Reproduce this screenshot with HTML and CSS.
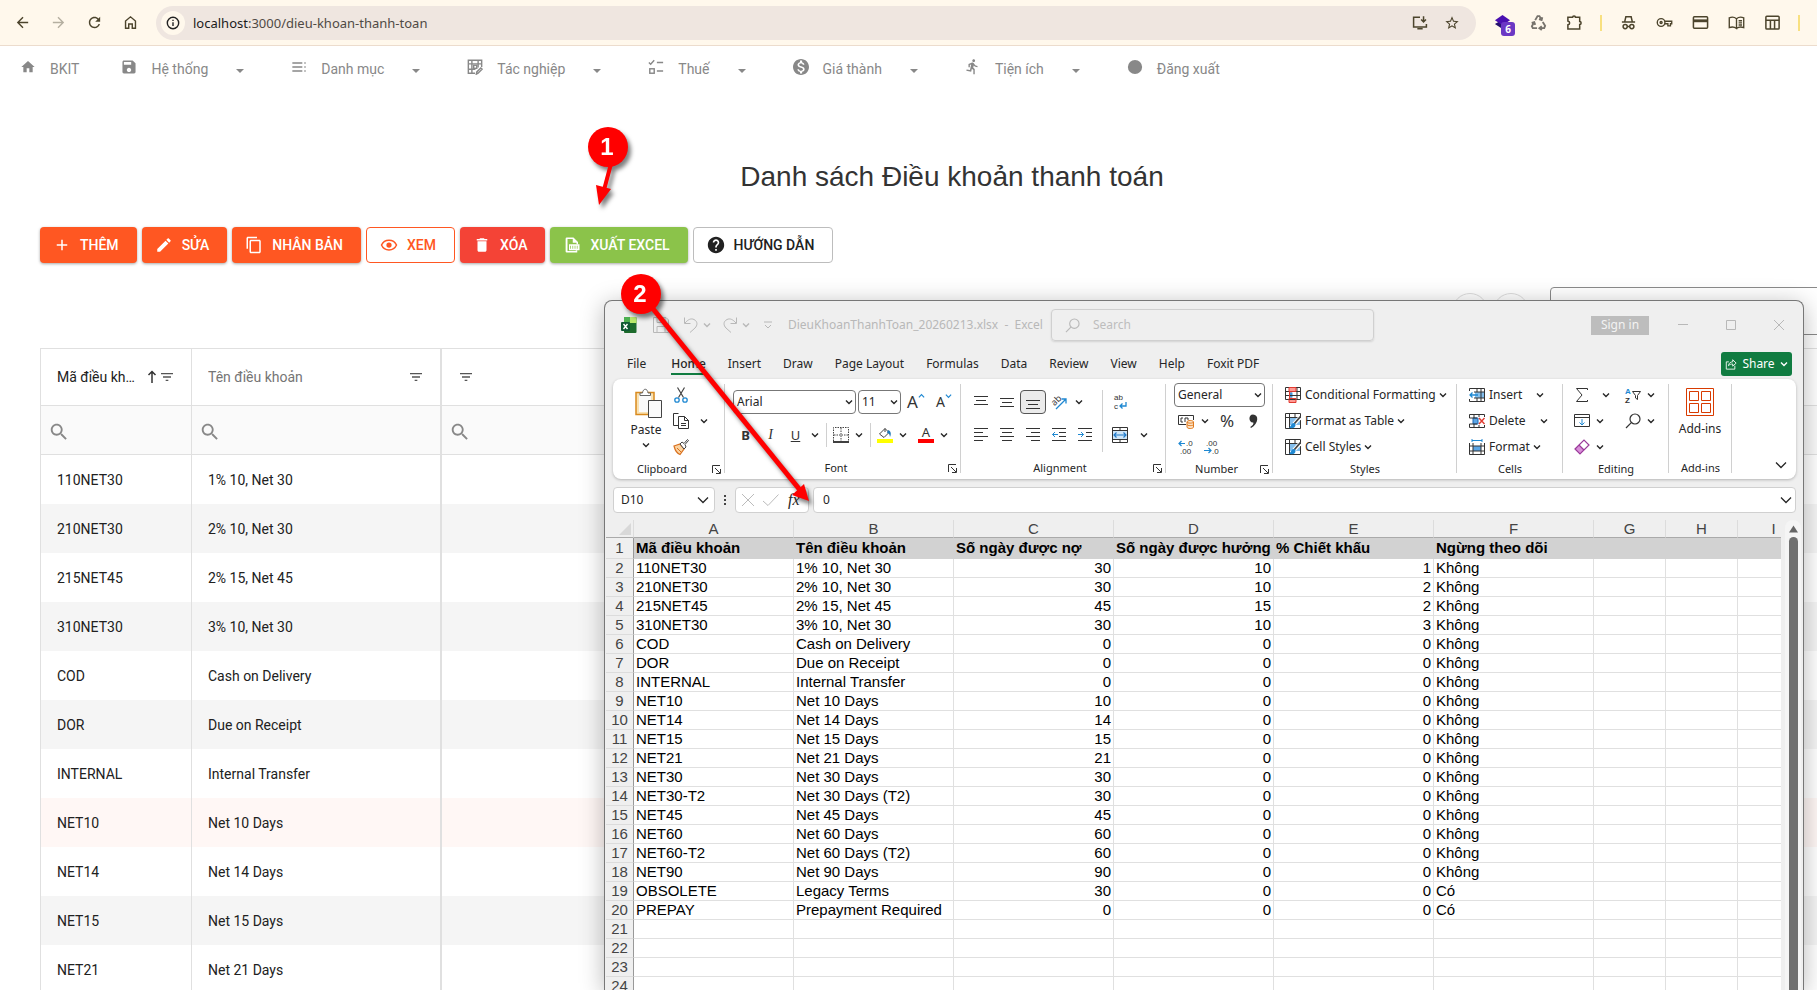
FILE: index.html
```html
<!DOCTYPE html>
<html lang="vi">
<head>
<meta charset="utf-8">
<title>Danh sách Điều khoản thanh toán</title>
<link rel="stylesheet" href="styles.css">
</head>
<body>
<svg class="sprite" aria-hidden="true">
  <symbol id="chev" viewBox="0 0 8 6"><path d="M1 1.500l3 3 3-3" fill="none" stroke="currentColor" stroke-width="1.400"/></symbol>
  <symbol id="chevl" viewBox="0 0 12 8"><path d="M1 1.500l5 5 5-5" fill="none" stroke="currentColor" stroke-width="1.300"/></symbol>
  <symbol id="filter" viewBox="0 0 24 24"><path d="M10 18h4v-2h-4v2zM3 6v2h18V6H3zm3 7h12v-2H6v2z"/></symbol>
  <symbol id="search" viewBox="0 0 24 24"><path d="M15.500 14h-.79l-.28-.27C15.410 12.590 16 11.110 16 9.500 16 5.910 13.090 3 9.500 3S3 5.910 3 9.500 5.910 16 9.500 16c1.610 0 3.090-.59 4.230-1.570l.27.28v.79l5 4.990L20.490 19l-4.990-5zm-6 0C7.010 14 5 11.990 5 9.500S7.010 5 9.500 5 14 7.010 14 9.500 11.990 14 9.500 14z"/></symbol>
  <symbol id="drop" viewBox="0 0 8 4"><path d="M0 0h8L4 4z"/></symbol>
  <symbol id="launch" viewBox="0 0 9 9"><path d="M.5 8V.5H8M3 3l5 5M8.500 4v4.500H4" fill="none" stroke="#333"/></symbol>
  <symbol id="glass" viewBox="0 0 16 16"><path d="M1 15l5.300-5.300" fill="none" stroke="currentColor" stroke-width="1.200"/><circle cx="10" cy="6" r="5" fill="none" stroke="currentColor" stroke-width="1.200"/></symbol>
  <symbol id="paintgrid" viewBox="0 0 16 16"><path d="M4 4h11v8H4z" fill="#83beec"/><path d="M.5.5h15v15H.500zM.5 4.500h15M4.500.5v15M10 .5v4" fill="none" stroke="#333"/><path d="M15.500 4L9 11" stroke="#fff" stroke-width="4"/><path d="M15.500 3.500L9 11" stroke="#444" stroke-width="1.800"/><path d="M9.500 10c-3-.5-3 3-5.500 4.500 3 1.500 7 .5 6.500-3z" fill="#1e88d2"/></symbol>
</svg>

<header class="chrome">
  <div class="chrome-nav">
    <button class="cb" aria-label="Back"><svg viewBox="0 0 24 24"><path d="M20 11H7.830l5.590-5.590L12 4l-8 8 8 8 1.410-1.410L7.830 13H20v-2z"/></svg></button>
    <button class="cb dim" aria-label="Forward"><svg viewBox="0 0 24 24"><path d="M4 13h12.170l-5.590 5.590L12 20l8-8-8-8-1.410 1.410L16.170 11H4v2z"/></svg></button>
    <button class="cb" aria-label="Reload"><svg viewBox="0 0 24 24"><path d="M17.650 6.350C16.200 4.900 14.210 4 12 4c-4.420 0-7.990 3.580-7.990 8s3.570 8 7.990 8c3.730 0 6.840-2.550 7.730-6h-2.080c-.82 2.330-3.040 4-5.650 4-3.310 0-6-2.690-6-6s2.690-6 6-6c1.660 0 3.140.69 4.220 1.780L13 11h7V4l-2.350 2.350z"/></svg></button>
    <button class="cb" aria-label="Home"><svg viewBox="0 0 24 24" class="ln"><path d="M5 20V10l7-6 7 6v10h-4.500v-6h-5v6z"/></svg></button>
  </div>
  <div class="omni">
    <span class="omni-info"><svg viewBox="0 0 16 16" class="ln"><circle cx="8" cy="8" r="6.500"/><path d="M8 7v4.500M8 4.300v1.500"/></svg></span>
    <span class="url"><b>localhost</b>:3000/dieu-khoan-thanh-toan</span>
    <svg viewBox="0 0 18 18" class="ln omni-ic"><path d="M9 2.500H1.800v11h14.400V10M6 15.500h6M13 1.500v6M10.300 5L13 7.700 15.700 5"/></svg>
    <svg viewBox="0 0 24 24" class="omni-ic"><path d="M22 9.240l-7.190-.62L12 2 9.190 8.630 2 9.240l5.460 4.730L5.820 21 12 17.270 18.180 21l-1.630-7.030L22 9.240zM12 15.400l-3.760 2.270 1-4.280-3.320-2.880 4.380-.38L12 6.100l1.710 4.040 4.380.38-3.320 2.880 1 4.280L12 15.400z"/></svg>
  </div>
  <div class="exts">
    <span class="ext"><svg viewBox="0 0 18 18"><path d="M9 6l8 4.500L9 16 1 10.500z" fill="#24106e"/><path d="M9 1l8 5.500L9 12 1 6.500z" fill="#4a10b0"/></svg><span class="count">6</span></span>
    <span class="ext grey"><svg viewBox="0 0 18 18" class="ln2"><path d="M5.500 6.500L8 2.200h2l2 3.500M13 3.500L12.300 6.300 9.500 5.500M13.500 8.500l2.500 4-1 2.500h-4.500M12.500 13L10 15l2.500 2M7.500 15H3l-1-2 2.200-4M1.800 9.500L4.500 8.700l1 2.800" stroke-width="2"/></svg></span>
    <span class="ext"><svg viewBox="0 0 18 18" class="ln2"><path d="M2 3.500h5a1.500 1.500 0 0 1 3 0h4.500v4.500a1.500 1.500 0 0 1 0 3v5H2v-4.500c2.500-.5 2.500-3.500 0-4z"/></svg></span>
    <i class="vbar"></i>
    <span class="ext"><svg viewBox="0 0 18 18" class="ln2"><path d="M2 8.500h14M5 8l1.200-5h5.600L13 8M8 13.300h2"/><circle cx="5.500" cy="13.300" r="2.200"/><circle cx="12.500" cy="13.300" r="2.200"/></svg></span>
    <span class="ext"><svg viewBox="0 0 20 18" class="ln2"><circle cx="6" cy="9" r="4.500"/><circle cx="6" cy="9" r="1.200"/><path d="M10.300 7.500H18.500v3h-1.500V13h-3v-2.500h-3.700"/></svg></span>
    <span class="ext"><svg viewBox="0 0 18 18" class="ln2"><rect x="1.500" y="3" width="15" height="12" rx="1"/><path d="M1.500 7.200h15" stroke-width="3"/></svg></span>
    <span class="ext"><svg viewBox="0 0 20 18" class="ln2"><path d="M10 4.500v11.500C7.500 14 4 14 1.500 15V3.500C4 2.500 7.500 2.500 10 4.500zM10 4.500c2.500-2 6-2 8.500-1V15c-2.500-1-6-1-8.500 1M12.500 7h4M12.500 9.500h4M12.500 12h4"/></svg></span>
    <span class="ext"><svg viewBox="0 0 18 18" class="ln2"><rect x="2" y="2.500" width="14" height="13.500" rx="1"/><path d="M2 6.500h14M6.800 6.500V16M11.200 6.500V16"/></svg></span>
    <i class="vbar"></i>
  </div>
</header>

<nav class="menu">
  <a class="mi" href="#"><svg viewBox="0 0 24 24"><path d="M10 20v-6h4v6h5v-8h3L12 3 2 12h3v8z"/></svg>BKIT</a>
  <a class="mi" href="#"><svg viewBox="1 1 22 22"><path d="M17 3H5c-1.110 0-2 .9-2 2v14c0 1.100.89 2 2 2h14c1.100 0 2-.9 2-2V7l-4-4zm-5 16c-1.660 0-3-1.340-3-3s1.340-3 3-3 3 1.340 3 3-1.340 3-3 3zm3-10H5V5h10v4z"/></svg>Hệ thống<svg class="dn"><use href="#drop"/></svg></a>
  <a class="mi" href="#"><svg viewBox="0 0 24 24"><path d="M2 5h15v2H2zM2 11h15v2H2zM2 17h15v2H2zM20 5h2v2h-2zM20 11h2v2h-2zM20 17h2v2h-2z"/></svg>Danh mục<svg class="dn"><use href="#drop"/></svg></a>
  <a class="mi" href="#"><svg viewBox="0 0 18 18" class="ln2"><path d="M9 16H1.500V1.500h15V9M1.500 5.500h15M1.500 11.500h8M5.500 1.500v14.500M12.500 1.500v8"/><rect x="7.500" y="7" width="3.500" height="3.500"/><path d="M10.500 17l.5-2.500 4.500-4.500 1.500 1.500-4.500 4.500z"/></svg>Tác nghiệp<svg class="dn"><use href="#drop"/></svg></a>
  <a class="mi" href="#"><svg viewBox="0 0 18 18" class="ln2"><path d="M1 4l2 2L7 1.500M10 4h7M10 13.500h7"/><rect x="2" y="11" width="5" height="5"/></svg>Thuế<svg class="dn"><use href="#drop"/></svg></a>
  <a class="mi" href="#"><svg viewBox="2 2 20 20"><path d="M12 2C6.480 2 2 6.480 2 12s4.480 10 10 10 10-4.480 10-10S17.520 2 12 2zm1.410 16.090V20h-2.670v-1.930c-1.710-.36-3.160-1.460-3.270-3.400h1.960c.1 1.050.82 1.870 2.650 1.870 1.960 0 2.400-.98 2.400-1.590 0-.83-.44-1.610-2.670-2.140-2.480-.6-4.180-1.620-4.180-3.670 0-1.720 1.390-2.840 3.110-3.210V4h2.670v1.950c1.860.45 2.790 1.860 2.850 3.390H14.300c-.05-1.110-.64-1.870-2.220-1.870-1.500 0-2.400.68-2.400 1.640 0 .84.65 1.390 2.670 1.910s4.180 1.390 4.180 3.910c-.01 1.830-1.380 2.830-3.120 3.160z"/></svg>Giá thành<svg class="dn"><use href="#drop"/></svg></a>
  <a class="mi" href="#"><svg viewBox="1 1 23 23"><path d="M13.490 5.480c1.100 0 2-.9 2-2s-.9-2-2-2-2 .9-2 2 .9 2 2 2zm-3.600 13.900l1-4.400 2.100 2v6h2v-7.500l-2.100-2 .6-3c1.300 1.500 3.300 2.500 5.500 2.500v-2c-1.900 0-3.500-1-4.300-2.400l-1-1.600c-.4-.6-1-1-1.700-1-.3 0-.5.1-.8.1l-5.200 2.200v4.700h2v-3.400l1.800-.7-1.600 8.100-4.900-1-.4 2 7 1.400z"/></svg>Tiện ích<svg class="dn"><use href="#drop"/></svg></a>
  <a class="mi" href="#"><svg viewBox="0 0 18 18"><circle cx="9" cy="9" r="8"/></svg>Đăng xuất</a>
</nav>

<main class="page">
  <h1>Danh sách Điều khoản thanh toán</h1>
  <div class="actions">
    <button class="act orange"><svg viewBox="0 0 24 24"><path d="M19 13h-6v6h-2v-6H5v-2h6V5h2v6h6v2z"/></svg>THÊM</button>
    <button class="act orange"><svg viewBox="0 0 24 24"><path d="M3 17.250V21h3.750L17.810 9.940l-3.750-3.750L3 17.250zM20.710 7.040c.39-.39.39-1.020 0-1.410l-2.340-2.340c-.39-.39-1.020-.39-1.410 0l-1.830 1.830 3.750 3.750 1.830-1.830z"/></svg>SỬA</button>
    <button class="act orange"><svg viewBox="0 0 24 24"><path d="M16 1H4c-1.100 0-2 .9-2 2v14h2V3h12V1zm3 4H8c-1.100 0-2 .9-2 2v14c0 1.100.9 2 2 2h11c1.100 0 2-.9 2-2V7c0-1.100-.9-2-2-2zm0 16H8V7h11v14z"/></svg>NHÂN BẢN</button>
    <button class="act outline"><svg viewBox="0 0 24 24"><path d="M2 12c2-4.500 6-6.500 10-6.500s8 2 10 6.500c-2 4.500-6 6.500-10 6.500S4 16.500 2 12z" fill="none" stroke="currentColor" stroke-width="2"/><circle cx="12" cy="12" r="3.500"/></svg>XEM</button>
    <button class="act red"><svg viewBox="0 0 24 24"><path d="M6 19c0 1.100.9 2 2 2h8c1.100 0 2-.9 2-2V7H6v12zM19 4h-3.500l-1-1h-5l-1 1H5v2h14V4z"/></svg>XÓA</button>
    <button class="act green"><svg viewBox="0 0 24 24"><path d="M14 2H5a1.500 1.500 0 0 0-1.500 1.500v17A1.500 1.500 0 0 0 5 22h14v-3h-2v1H6V4h7v5h5v2h2V8z"/><path d="M8 11h14v8H8z"/><path d="M10 13v4M13 13v4M16 13v4M19 13v4" stroke="#8bc34a"/></svg>XUẤT EXCEL</button>
    <button class="act plain"><svg viewBox="1 1 22 22"><path d="M12 2C6.480 2 2 6.480 2 12s4.480 10 10 10 10-4.480 10-10S17.520 2 12 2zm1 17h-2v-2h2v2zm2.070-7.750l-.9.92C13.450 12.900 13 13.500 13 15h-2v-.5c0-1.100.45-2.100 1.170-2.830l1.240-1.260c.37-.36.59-.86.59-1.410 0-1.100-.9-2-2-2s-2 .9-2 2H8c0-2.210 1.790-4 4-4s4 1.790 4 4c0 .88-.36 1.680-.93 2.250z"/></svg>HƯỚNG DẪN</button>
  </div>
  <div class="panel">
    <button class="round" aria-label="Cột"></button>
    <button class="round" aria-label="Xuất"></button>
    <input class="find" type="text" aria-label="Tìm kiếm">
  </div>
  <table class="grid">
    <colgroup><col class="g1"><col class="g2"><col></colgroup>
    <thead>
      <tr class="head">
        <th><div class="th"><span class="lbl dark">Mã điều khoản</span><svg class="up" viewBox="0 0 10 14"><path d="M5 13V1.500M1.500 5L5 1.500 8.500 5" fill="none" stroke="currentColor" stroke-width="1.500"/></svg><svg class="fi"><use href="#filter"/></svg></div></th>
        <th><div class="th"><span class="lbl">Tên điều khoản</span><svg class="fi"><use href="#filter"/></svg></div></th>
        <th><div class="th"><svg class="fi"><use href="#filter"/></svg></div></th>
      </tr>
      <tr class="filt"><td><svg class="si"><use href="#search"/></svg></td><td><svg class="si"><use href="#search"/></svg></td><td><svg class="si"><use href="#search"/></svg></td></tr>
    </thead>
    <tbody>
      <tr><td>110NET30</td><td>1% 10, Net 30</td><td></td></tr>
      <tr><td>210NET30</td><td>2% 10, Net 30</td><td></td></tr>
      <tr><td>215NET45</td><td>2% 15, Net 45</td><td></td></tr>
      <tr><td>310NET30</td><td>3% 10, Net 30</td><td></td></tr>
      <tr><td>COD</td><td>Cash on Delivery</td><td></td></tr>
      <tr><td>DOR</td><td>Due on Receipt</td><td></td></tr>
      <tr><td>INTERNAL</td><td>Internal Transfer</td><td></td></tr>
      <tr class="focus"><td>NET10</td><td>Net 10 Days</td><td></td></tr>
      <tr><td>NET14</td><td>Net 14 Days</td><td></td></tr>
      <tr><td>NET15</td><td>Net 15 Days</td><td></td></tr>
      <tr><td>NET21</td><td>Net 21 Days</td><td></td></tr>
    </tbody>
  </table>
</main>

<section class="win" aria-label="Excel">
  <div class="tbar">
    <svg class="xl" viewBox="0 0 16 16"><rect x="3" width="12.500" height="16" rx="1" fill="#1d6b2c"/><path d="M3 0h6v6H3z" fill="#4cb050"/><path d="M9 0h5.500a1 1 0 0 1 1 1v5H9z" fill="#b9e86b"/><rect y="5" width="9" height="9" rx="1" fill="#0f5a34"/><path d="M2.500 7l4 5M6.500 7l-4 5" stroke="#fff" stroke-width="1.400"/></svg>
    <svg class="t16" viewBox="0 0 16 16"><path d="M.5.5h12.500l2.500 2.500v12.500H.5zM4 .5v5h8v-5M4 15.500v-6h8v6"/></svg>
    <svg class="t16 undo" viewBox="0 0 16 16"><path d="M1.500.5v6h6M2 6C5 2.500 8 1 11 2.500c4 2 3.500 6 1 8.500l-5 4.500"/></svg><svg class="tc"><use href="#chev"/></svg>
    <svg class="t16 redo" viewBox="0 0 16 16"><path d="M14.500.5v6h-6M14 6C11 2.500 8 1 5 2.500c-4 2-3.500 6-1 8.500l5 4.500"/></svg><svg class="tc"><use href="#chev"/></svg>
    <svg class="t8" viewBox="0 0 8 8"><path d="M0 1h8M1 4l3 3 3-3"/></svg>
    <span class="doc">DieuKhoanThanhToan_20260213.xlsx&nbsp; -&nbsp; Excel</span>
    <label class="wsearch"><svg><use href="#glass"/></svg><input type="text" placeholder="Search" aria-label="Search"></label>
    <button class="signin">Sign in</button>
    <button class="wc" aria-label="Minimize"><svg viewBox="0 0 10 10"><path d="M0 4.500h10"/></svg></button>
    <button class="wc" aria-label="Maximize"><svg viewBox="0 0 10 10"><path d="M.5.5h9v9h-9z"/></svg></button>
    <button class="wc" aria-label="Close"><svg viewBox="0 0 10 10"><path d="M0 0l10 10M10 0L0 10"/></svg></button>
  </div>
  <div class="tabs">
    <a class="tab first" href="#">File</a><a class="tab on" href="#">Home</a><a class="tab" href="#">Insert</a><a class="tab" href="#">Draw</a><a class="tab" href="#">Page Layout</a><a class="tab" href="#">Formulas</a><a class="tab" href="#">Data</a><a class="tab" href="#">Review</a><a class="tab" href="#">View</a><a class="tab" href="#">Help</a><a class="tab" href="#">Foxit PDF</a>
    <button class="share"><svg viewBox="0 0 14 14" class="ln"><path d="M4.500 4.500H1.500v8.500h10V9M4 9c.5-3.500 3-4.500 5-4.500V2l4 4-4 3.500V7C7 7 5.500 7.500 4 9z"/></svg>Share<svg class="tc"><use href="#chev"/></svg></button>
  </div>

  <div class="ribbon">
    <div class="grp clip">
      <div class="body">
        <button class="big"><svg class="paste" viewBox="0 0 28 30"><path d="M2 4.500h18v22H2z" fill="#f9e2b3" stroke="#d98a1e" stroke-width="1.500"/><path d="M5 7h12v17H5z" fill="#fafafa"/><path d="M6 7.500V5h2.500c.5-5 5-5 5.500 0h2.500v2.500z" fill="#fff" stroke="#666"/><path d="M14.500 12.500h13v17h-13z" fill="#fafafa" stroke="#444"/></svg>Paste<svg class="cv"><use href="#chev"/></svg></button>
        <div class="rows3">
          <div class="r"><span class="ib"><svg viewBox="0 0 16 16"><path d="M4.500.5l6 10M11.500.5l-6 10" fill="none" stroke="#444" stroke-width="1.200"/><circle cx="4" cy="13" r="2.200" fill="none" stroke="#1e88d2" stroke-width="1.300"/><circle cx="12" cy="13" r="2.200" fill="none" stroke="#1e88d2" stroke-width="1.300"/></svg></span></div>
          <div class="r"><span class="ib"><svg viewBox="0 0 16 16" class="k"><path d="M5 12.500H.5V.5H5.500M5.500 3.500h6l4 4v8h-10zM11.500 3.500v4h4M8 10.500h5M8 12.500h5"/></svg></span><span class="cvb ml6"><svg><use href="#chev"/></svg></span></div>
          <div class="r"><span class="ib"><svg viewBox="0 0 16 16"><path d="M1 7l6-2 4 5-4 5.500C4 14.500 2 11 1 7z" fill="#fbd3a0" stroke="#d9701e" stroke-width="1.200"/><path d="M4 9l4 4" stroke="#d9701e"/><path d="M7 5l2-2 2 1.500L14.500.5l1 1L12 5.500 13 8l-2 2z" fill="#fff" stroke="#444"/></svg></span></div>
        </div>
      </div>
      <div class="gl">Clipboard<svg class="la"><use href="#launch"/></svg></div>
    </div>
    <div class="grp font">
      <div class="rows2">
        <div class="r pl8 g2p"><span class="pick wide"><select aria-label="Font"><option>Arial</option></select><svg><use href="#chev"/></svg></span><span class="pick size"><select aria-label="Font size"><option>11</option></select><svg><use href="#chev"/></svg></span><span class="ib w26 a18">A<svg class="sup" viewBox="0 0 8 6"><path d="M1 4.500l3-3 3 3" fill="none" stroke="#1e88d2" stroke-width="1.400"/></svg></span><span class="ib w26 a16">A<svg class="sup blue"><use href="#chev"/></svg></span></div>
        <div class="r pl8"><b class="ib w25 fmt">B</b><i class="ib w25 fmt ser">I</i><u class="ib w25 fmt">U</u><span class="cvb"><svg><use href="#chev"/></svg></span><i class="sep"></i><span class="ib w22"><svg viewBox="0 0 16 16"><path d="M.5 14V.5h15V14M8 1v13M1 8h14" fill="none" stroke="#444" stroke-dasharray="1.500 1"/><path d="M0 15h16" stroke="#111" stroke-width="1.600"/></svg></span><span class="cvb"><svg><use href="#chev"/></svg></span><i class="sep"></i><span class="ib w22"><svg viewBox="0 0 16 16"><path d="M2.500 7L8 1.500l4 4L7 10.500zM8 1.500V5" fill="none" stroke="#444"/><path d="M11 3c3 1 3.500 4 2 7-.5-3-1-4-3-4z" fill="#1e78b8"/><path d="M0 12h16v4H0z" fill="#ff0"/></svg></span><span class="cvb"><svg><use href="#chev"/></svg></span><span class="ib w22 ml5"><svg viewBox="0 0 16 16"><text x="8" y="10" class="sa">A</text><path d="M0 12h16v4H0z" fill="#f00"/></svg></span><span class="cvb"><svg><use href="#chev"/></svg></span></div>
      </div>
      <div class="gl">Font<svg class="la"><use href="#launch"/></svg></div>
    </div>
    <div class="grp align">
      <div class="body">
        <div class="rows2 c130">
          <div class="r"><span class="ib w26"><svg viewBox="0 0 14 14" class="k"><path d="M0 1.500h14M2 5.500h10M0 9.500h14"/></svg></span><span class="ib w26"><svg viewBox="0 0 14 14" class="k"><path d="M0 3.500h14M2 7.500h10M0 11.500h14"/></svg></span><span class="ib w26 sel"><svg viewBox="0 0 14 14" class="k"><path d="M0 5.500h14M2 9.500h10M0 13.500h14"/></svg></span><span class="ib w26"><svg viewBox="0 0 16 16"><text x="1" y="10" class="ab" transform="rotate(-45 5 8)">ab</text><path d="M5 15L14.500 5.500M10.500 5h4.500v4.500" fill="none" stroke="#1e88d2" stroke-width="1.300"/></svg></span><span class="cvb"><svg><use href="#chev"/></svg></span></div>
          <div class="r"><span class="ib w26"><svg viewBox="0 0 14 14" class="k"><path d="M0 .5h14M0 4.500h9M0 8.500h14M0 12.500h9"/></svg></span><span class="ib w26"><svg viewBox="0 0 14 14" class="k"><path d="M0 .5h14M2 4.500h10M0 8.500h14M2 12.500h10"/></svg></span><span class="ib w26"><svg viewBox="0 0 14 14" class="k"><path d="M0 .5h14M5 4.500h9M0 8.500h14M5 12.500h9"/></svg></span><span class="ib w26"><svg viewBox="0 0 14 14" class="k"><path d="M0 .5h14M7 4.500h7M7 8.500h7M0 12.500h14"/><path d="M6 6.500H.5M3 4L.5 6.500 3 9" stroke="#1e88d2"/></svg></span><span class="ib w26"><svg viewBox="0 0 14 14" class="k"><path d="M0 .5h14M8 4.500h6M8 8.500h6M0 12.500h14"/><path d="M0 6.500h5.500M3 4l2.500 2.500L3 9" stroke="#1e88d2"/></svg></span></div>
        </div>
        <i class="sep tall"></i>
        <div class="rows2">
          <div class="r"><span class="ib w28"><svg viewBox="0 0 16 16"><text x="2" y="6" class="wr">ab</text><text x="2" y="15" class="wr">c</text><path d="M14 8v4H8M10.500 9.500L8 12l2.500 2.500" fill="none" stroke="#1e88d2" stroke-width="1.300"/></svg></span></div>
          <div class="r"><span class="ib w28"><svg viewBox="0 0 16 16"><path d="M.5 3.500h15v9H.5z" fill="#cfe6f8"/><path d="M.5.5h15v15H.5zM.5 3.500h15M.5 12.500h15M8 .5v3M8 12.500v3" fill="none" stroke="#333"/><path d="M2 8h12M4.500 5.500L2 8l2.500 2.500M11.500 5.500L14 8l-2.500 2.500" fill="none" stroke="#1e78c8" stroke-width="1.200"/></svg></span><span class="cvb ml3"><svg><use href="#chev"/></svg></span></div>
        </div>
      </div>
      <div class="gl">Alignment<svg class="la"><use href="#launch"/></svg></div>
    </div>
    <div class="grp num">
      <div class="rows3">
        <div class="r"><span class="pick gen"><select aria-label="Number format"><option>General</option></select><svg><use href="#chev"/></svg></span></div>
        <div class="r"><span class="ib w24"><svg viewBox="0 0 16 16"><path d="M8 11.500H.5v-9h15V7" fill="none" stroke="#333"/><path d="M5 5H3v4h2M7 9V5h3v2" fill="none" stroke="#333"/><path d="M9 9c0-2 6.500-2 6.500 0v5c0 2-6.500 2-6.500 0z" fill="#fde3c6" stroke="#e07a1e"/><path d="M9 9c0 1.500 6.500 1.500 6.500 0M9 11.500c0 1.500 6.500 1.500 6.500 0" fill="none" stroke="#e07a1e"/></svg></span><span class="cvb"><svg><use href="#chev"/></svg></span><span class="ib w30 pct">%</span><span class="ib w22"><svg viewBox="0 0 16 16"><path d="M8 1.500c6 0 6 9-2 13.500l-.7-1c2.500-1.700 3.500-3 3-4.500C3.500 10 3 1.500 8 1.500z" fill="#333"/></svg></span></div>
        <div class="r"><span class="ib w24"><svg viewBox="0 0 16 16"><path d="M7 4.500H1M3.500 2L1 4.500 3.500 7" fill="none" stroke="#1e88d2" stroke-width="1.200"/><text x="8" y="7" class="dg">.0</text><text x="2" y="15" class="dg">.00</text></svg></span><span class="ib w28"><svg viewBox="0 0 16 16"><path d="M0 11.500h7M4.500 9L7 11.500 4.500 14" fill="none" stroke="#1e88d2" stroke-width="1.200"/><text x="2" y="7" class="dg">.00</text><text x="8" y="15" class="dg">.0</text></svg></span></div>
      </div>
      <div class="gl">Number<svg class="la"><use href="#launch"/></svg></div>
    </div>
    <div class="grp styl">
      <div class="rows3 pl12">
        <button class="r tx"><svg viewBox="0 0 16 16"><path d="M4 1h7v4H4zM4 5h3v6H4z" fill="#ff9a94"/><path d="M4 11h7v4H4z" fill="#ff9a94"/><path d="M4.500 5.500h3v5h-3z" fill="#3f97e0"/><path d="M.5.500h15v12H.5zM.5 4.500h15M.5 8.500h15M12 .5v12" fill="none" stroke="#333"/><path d="M4 .5h7v4H4zM4 11.500h7v4H4zM4.500 4.500v7" fill="none" stroke="#e03a30"/></svg>Conditional Formatting<svg class="cv"><use href="#chev"/></svg></button>
        <button class="r tx"><svg><use href="#paintgrid"/></svg>Format as Table<svg class="cv"><use href="#chev"/></svg></button>
        <button class="r tx"><svg><use href="#paintgrid"/></svg>Cell Styles<svg class="cv"><use href="#chev"/></svg></button>
      </div>
      <div class="gl">Styles</div>
    </div>
    <div class="grp cells">
      <div class="rows3 pl12">
        <button class="r tx"><svg viewBox="0 0 16 16"><path d="M6 5h9v6H6z" fill="#83beec"/><path d="M4 1.500h11.500v13H4M.5 4V1.500H5M.5 12v2.500H5M5 5h10.500M5 11h10.500M8 1.500V5M12 1.500v13M8 11v3.500" fill="none" stroke="#333"/><path d="M9 8H1M3.500 5.500L1 8l2.500 2.500" fill="none" stroke="#1e88d2" stroke-width="1.300"/></svg>Insert<svg class="cv far"><use href="#chev"/></svg></button>
        <button class="r tx"><svg viewBox="0 0 16 16"><path d="M4 5h5v6H4z" fill="#5aa5e6" stroke="#1e66b0"/><path d="M15.500 4V1.500H.5V5H8M.5 14.500h15V12M.5 11v3.500M.5 11H8M5 1.500V5M10 1.500V4M5 11v3.500M10 12v2.500" fill="none" stroke="#333"/><path d="M10 5l5.500 6M15.500 5L10 11" stroke="#e03a30" stroke-width="1.400"/></svg>Delete<svg class="cv far"><use href="#chev"/></svg></button>
        <button class="r tx"><svg viewBox="0 0 16 16"><path d="M4 7h8v5H4z" fill="#5aa5e6"/><path d="M.5 4v11.500h15V4M.5 7h15M.5 12h15M4 4v11.500M12 4v11.500" fill="none" stroke="#333"/><path d="M3 1.500h10M3 0v3M13 0v3" stroke="#1e88d2"/></svg>Format<svg class="cv"><use href="#chev"/></svg></button>
      </div>
      <div class="gl">Cells</div>
    </div>
    <div class="grp edit">
      <div class="rows3 pl8">
        <div class="r"><span class="duo"><span class="ib w22"><svg viewBox="0 0 16 16" class="k"><path d="M13.500 3V1.500H2.500L8 8l-5.500 6.500h11V13"/></svg></span><span class="cvb ml6"><svg><use href="#chev"/></svg></span></span><span class="ib w22"><svg viewBox="0 0 16 16"><text x="0" y="7" class="az blue">A</text><text x="0" y="16" class="az">Z</text><path d="M7.500 4.500h8l-3 4v4l-2-1.500V8.500z" fill="none" stroke="#333"/></svg></span><span class="cvb"><svg><use href="#chev"/></svg></span></div>
        <div class="r"><span class="duo"><span class="ib w22"><svg viewBox="0 0 16 16" class="k"><path d="M.5 1.500h15v12H.5zM.5 4.500h15"/><path d="M8 6v6M5.500 9.500L8 12l2.500-2.500" stroke="#1e88d2"/></svg></span><span class="cvb"><svg><use href="#chev"/></svg></span></span><span class="ib w22"><svg><use href="#glass"/></svg></span><span class="cvb"><svg><use href="#chev"/></svg></span></div>
        <div class="r"><span class="ib w22"><svg viewBox="0 0 16 16"><path d="M1 10l4-4 5 5-4 4z" fill="#d98fd9"/><path d="M1 10L10 1l5 5-9 9zM5 6l5 5" fill="none" stroke="#9a3a9a" stroke-width="1.200"/></svg></span><span class="cvb"><svg><use href="#chev"/></svg></span></div>
      </div>
      <div class="gl">Editing</div>
    </div>
    <div class="grp adds">
      <button class="big"><svg class="addin" viewBox="0 0 28 28"><path d="M.5.500h27v27H.5zM3.500 3.500h9v9h-9zM15.500 3.500h9v9h-9zM3.500 15.500h9v9h-9zM15.500 15.500h9v9h-9z" fill="none" stroke="#d83b01"/></svg>Add-ins</button>
      <div class="gl">Add-ins</div>
    </div>
    <div class="rest"><button aria-label="Collapse ribbon"><svg><use href="#chevl"/></svg></button></div>
  </div>

  <div class="fbar">
    <label class="box name"><input type="text" value="D10" aria-label="Name box"><svg><use href="#chevl"/></svg></label>
    <svg class="dots" viewBox="0 0 4 12"><path d="M1 1h2v2H1zM1 5h2v2H1zM1 9h2v2H1z" fill="#444"/></svg>
    <div class="box fx"><svg viewBox="0 0 12 12"><path d="M0 0l12 12M12 0L0 12" stroke="#bbb"/></svg><svg class="tick" viewBox="0 0 16 12"><path d="M0 7l5 4.500L15.500.5" stroke="#bbb" fill="none"/></svg><i>fx</i></div>
    <label class="box val"><input type="text" value="0" aria-label="Formula"><svg><use href="#chevl"/></svg></label>
  </div>

  <div class="sheetwrap">
    <div class="view">
    <table class="sheet">
      <colgroup><col class="rn"><col class="w"><col class="w"><col class="w"><col class="w"><col class="w"><col class="w"><col class="n"><col class="n"><col class="n"></colgroup>
      <thead><tr><th class="corner"><svg viewBox="0 0 12 12"><path d="M12 0v12H0z" fill="#d8d8d8"/></svg><th>A<th>B<th>C<th>D<th>E<th>F<th>G<th>H<th>I</tr></thead>
      <tbody>
      <tr class="t"><th>1<td>Mã điều khoản<td>Tên điều khoản<td>Số ngày được nợ<td>Số ngày được hưởng<td>% Chiết khấu<td>Ngừng theo dõi<td><td><td></tr>
      <tr><th>2<td>110NET30<td>1% 10, Net 30<td>30<td>10<td>1<td>Không<td><td><td></tr>
      <tr><th>3<td>210NET30<td>2% 10, Net 30<td>30<td>10<td>2<td>Không<td><td><td></tr>
      <tr><th>4<td>215NET45<td>2% 15, Net 45<td>45<td>15<td>2<td>Không<td><td><td></tr>
      <tr><th>5<td>310NET30<td>3% 10, Net 30<td>30<td>10<td>3<td>Không<td><td><td></tr>
      <tr><th>6<td>COD<td>Cash on Delivery<td>0<td>0<td>0<td>Không<td><td><td></tr>
      <tr><th>7<td>DOR<td>Due on Receipt<td>0<td>0<td>0<td>Không<td><td><td></tr>
      <tr><th>8<td>INTERNAL<td>Internal Transfer<td>0<td>0<td>0<td>Không<td><td><td></tr>
      <tr><th>9<td>NET10<td>Net 10 Days<td>10<td>0<td>0<td>Không<td><td><td></tr>
      <tr><th>10<td>NET14<td>Net 14 Days<td>14<td>0<td>0<td>Không<td><td><td></tr>
      <tr><th>11<td>NET15<td>Net 15 Days<td>15<td>0<td>0<td>Không<td><td><td></tr>
      <tr><th>12<td>NET21<td>Net 21 Days<td>21<td>0<td>0<td>Không<td><td><td></tr>
      <tr><th>13<td>NET30<td>Net 30 Days<td>30<td>0<td>0<td>Không<td><td><td></tr>
      <tr><th>14<td>NET30-T2<td>Net 30 Days (T2)<td>30<td>0<td>0<td>Không<td><td><td></tr>
      <tr><th>15<td>NET45<td>Net 45 Days<td>45<td>0<td>0<td>Không<td><td><td></tr>
      <tr><th>16<td>NET60<td>Net 60 Days<td>60<td>0<td>0<td>Không<td><td><td></tr>
      <tr><th>17<td>NET60-T2<td>Net 60 Days (T2)<td>60<td>0<td>0<td>Không<td><td><td></tr>
      <tr><th>18<td>NET90<td>Net 90 Days<td>90<td>0<td>0<td>Không<td><td><td></tr>
      <tr><th>19<td>OBSOLETE<td>Legacy Terms<td>30<td>0<td>0<td>Có<td><td><td></tr>
      <tr><th>20<td>PREPAY<td>Prepayment Required<td>0<td>0<td>0<td>Có<td><td><td></tr>
      <tr><th>21<td><td><td><td><td><td><td><td><td></tr>
      <tr><th>22<td><td><td><td><td><td><td><td><td></tr>
      <tr><th>23<td><td><td><td><td><td><td><td><td></tr>
      <tr><th>24<td><td><td><td><td><td><td><td><td></tr>
      </tbody>
    </table>
    </div>
    <div class="vscroll"><svg viewBox="0 0 10 8"><path d="M5 0l5 8H0z" fill="#666"/></svg><i></i></div>
  </div>
</section>

<svg class="notes" viewBox="0 0 240 410" aria-hidden="true">
  <g fill="#f00" stroke="none">
    <path d="M32 60L24 90" stroke="#f00" stroke-width="4"/>
    <path d="M19 105l-3-20 15 4z"/>
    <circle cx="28" cy="47" r="20"/>
    <path d="M61 194L220 390" stroke="#f00" stroke-width="5"/>
    <path d="M229 401l-17-6 12-11z"/>
    <circle cx="61" cy="194" r="20"/>
  </g>
  <text x="27" y="55">1</text>
  <text x="60" y="202">2</text>
</svg>
</body>
</html>
```

FILE: styles.css
```css
* { box-sizing: border-box; }
body { margin: 0; height: 100vh; overflow: hidden; position: relative; background: #fff; font: 14px/20px Roboto, sans-serif; color: #212121; }
button, input, select { font: inherit; color: inherit; border: 0; background: none; padding: 0; margin: 0; outline: 0; }
a { color: inherit; text-decoration: none; }
svg { flex: none; fill: currentColor; display: block; }
.sprite { position: absolute; width: 0; height: 0; }
.ln, .ln2 { fill: none; stroke: currentColor; stroke-width: 2; }
.omni .ln, .share .ln { stroke-width: 1; }
.ln2 { stroke-width: 1.6; }
.k { fill: none; stroke: #333; stroke-width: 1; }

/* browser toolbar */
.chrome { display: flex; align-items: center; height: 46px; padding-left: 4px; background: #fff8ec; border-bottom: 1px solid #ecdccd; color: #4c442c; }
.chrome-nav { display: flex; width: 152px; }
.cb { width: 36px; height: 36px; display: grid; place-items: center; }
.cb svg { width: 17px; height: 17px; }
.dim { color: #b5afa0; }
.omni { flex: 1; height: 34px; display: flex; align-items: center; gap: 16px; padding: 0 16px 0 5px; border-radius: 17px; background: #efe6e0; font: 13px/18px "Noto Sans", sans-serif; }
.omni-info { width: 24px; height: 24px; border-radius: 50%; background: #fff8ec; display: grid; place-items: center; color: #222; }
.omni-info svg { width: 14px; height: 14px; }
.omni .omni-info .ln { stroke-width: 1.6; }
.url { flex: 1; margin-left: -8px; color: #4f4a45; }
.url b { font-weight: 400; color: #1b1b1b; }
.omni-ic { width: 16px; height: 16px; }
.omni .omni-ic.ln { stroke-width: 1.7; }
.exts { display: flex; align-items: center; padding: 0 9px 0 8px; }
.ext { width: 36px; height: 36px; display: grid; place-items: center; position: relative; }
.ext svg { width: 17px; height: 17px; }
.grey { color: #77736c; }
.count { position: absolute; left: 17px; top: 17px; width: 14px; height: 14px; border-radius: 3px; background: #6b38c4; color: #fff; font: bold 10px/14px "Noto Sans", sans-serif; text-align: center; }
.vbar { width: 2px; height: 16px; margin: 0 8px; background: #f8e080; }

/* application menu */
.menu { display: flex; gap: 42px; height: 46px; padding-left: 20px; align-items: center; color: #888; }
.mi { display: flex; align-items: center; gap: 14px; white-space: nowrap; }
.mi svg { width: 16px; height: 16px; margin-bottom: 4px; }
.mi .dn { width: 8px; height: 4px; margin: 4px 5px 0 14px; }

/* page */
.page { width: calc(100% + 87px); padding: 65px 40px 0; }
h1 { margin: 0 0 30px; text-align: center; font: 400 28px/40px "Liberation Sans", Arial, sans-serif; color: #333; }
.actions { display: flex; gap: 5px; }
.act { height: 36px; display: flex; align-items: center; gap: 9px; padding: 0 18px 0 13px; border-radius: 4px; font-weight: 500; color: #fff; box-shadow: 0 1px 3px rgba(0,0,0,.35); white-space: nowrap; }
.act svg { width: 18px; height: 18px; }
.orange { background: #ff5722; }
.red { background: #f44336; }
.green { background: #8bc34a; }
.outline { color: #ff5722; border: 1px solid #ff5722; box-shadow: none; }
.plain { color: #212121; border: 1px solid #bdbdbd; box-shadow: none; }
.panel { display: flex; justify-content: flex-end; align-items: center; gap: 5px; margin: 24px 0 13px; }
.round { width: 36px; height: 36px; border-radius: 50%; border: 1px solid #ddd; }
.find { width: 314px; height: 48px; margin-left: 16px; border: 1px solid #8a8a8a; border-radius: 4px; }
.grid { width: 100%; table-layout: fixed; border-collapse: separate; border-spacing: 0; border: 1px solid #e0e0e0; }
.g1 { width: 150px; }
.g2 { width: 249px; }
.grid th, .grid td { height: 49px; padding: 0 16px; text-align: left; font-weight: 400; border-left: 1px solid #e0e0e0; }
.grid th:first-child, .grid td:first-child { border-left: 0; }
.grid th:last-child, .grid td:last-child { border-left-width: 2px; }
.grid .head th { height: 57px; border-bottom: 1px solid #e0e0e0; color: #757575; }
.grid .filt td { height: 49px; padding: 3px 7px 0; background: #fafafa; border-bottom: 1px solid #e0e0e0; color: #888; }
.grid tbody tr:nth-child(even) { background: #f5f5f5; }
.grid tbody tr.focus:nth-child(even) { background: #fff7f5; }
.th { display: flex; align-items: center; gap: 2px; }
.lbl { flex: 1; overflow: hidden; text-overflow: ellipsis; white-space: nowrap; }
.lbl.dark { color: #212121; flex: 0 0 82px; margin-right: 6px; }
.up { width: 10px; height: 14px; color: #333; }
.fi { width: 16px; height: 16px; color: #555; }
.si { width: 22px; height: 22px; }

/* spreadsheet window */
.win { position: absolute; left: 604px; right: 13px; top: 300px; bottom: 0; display: flex; flex-direction: column; border: 1px solid #777; border-bottom: 0; border-radius: 8px 8px 0 0; background: #efefef; box-shadow: 0 4px 24px rgba(0,0,0,.28); font: 12px/16px "Noto Sans", sans-serif; color: #262626; white-space: nowrap; }
.tbar { display: flex; align-items: center; height: 48px; padding-left: 16px; color: #b8b8b8; }
.xl { width: 16px; height: 16px; margin-right: 16px; }
.t16, .t8 { width: 16px; height: 16px; fill: none; stroke: currentColor; }
.undo { margin-left: 14px; }
.redo { margin-left: 11px; }
.tc { width: 8px; height: 6px; margin-left: 4px; }
.t8 { width: 8px; height: 8px; margin-left: 14px; }
.doc { width: 247px; margin-left: 16px; }
.wsearch { width: 323px; height: 32px; margin-left: 16px; display: flex; align-items: center; gap: 13px; padding-left: 13px; border: 1px solid #d0d0d0; border-radius: 4px; box-shadow: 0 1px 2px rgba(0,0,0,.12); }
.wsearch svg { width: 15px; height: 15px; }
.wsearch input::placeholder { color: #bdbdbd; opacity: 1; }
.signin { width: 58px; height: 19px; margin-left: auto; margin-right: 10px; background: #bdbdbd; color: #f3f3f3; }
.wc { width: 48px; height: 32px; display: grid; place-items: center; }
.wc svg { width: 10px; height: 10px; fill: none; stroke: currentColor; }
.tabs { display: flex; gap: 22px; height: 30px; align-items: center; padding: 0 11px 0 22px; }
.tab { height: 22px; padding-top: 3px; border-bottom: 2px solid transparent; }
.first { margin-right: 3px; }
.on { border-color: #107c41; font-weight: 500; }
.share { margin-left: auto; width: 71px; height: 24px; display: flex; align-items: center; justify-content: center; gap: 5px; border-radius: 3px; background: #107c41; color: #fff; }
.share .ln { width: 12px; height: 12px; }
.share .tc { margin: 0; }
.ribbon { display: flex; height: 100px; margin: 0 7px 0 8px; border-radius: 8px; background: #fff; box-shadow: 0 1px 3px rgba(0,0,0,.25); }
.grp { display: flex; flex-direction: column; justify-content: space-between; background: linear-gradient(#d0d0d0, #d0d0d0) right 5px / 1px 89px no-repeat; }
.body { display: flex; }
.rows3, .rows2 { display: grid; grid-auto-rows: 26px; padding-top: 3px; align-content: start; }
.rows2 { grid-auto-rows: 33px; padding-top: 6px; }
.r { display: flex; align-items: center; }
.gl { height: 20px; display: flex; justify-content: center; position: relative; font-size: 11px; line-height: 18px; }
.clip .gl, .font .gl, .align .gl, .num .gl { padding-right: 14px; }
.la { position: absolute; right: 4px; top: 5px; width: 9px; height: 9px; }
.clip { width: 112px; }
.font { width: 236px; }
.align { width: 205px; padding-left: 7px; }
.num { width: 107px; padding-left: 8px; }
.styl { width: 184px; }
.cells, .edit { width: 106px; }
.adds { width: 63px; align-items: center; }
.pl8 { padding-left: 8px; }
.pl12 { padding-left: 12px; }
.g2p { gap: 2px; }
.ib { width: 20px; height: 24px; display: flex; align-items: center; justify-content: center; color: #333; }
.ib svg { width: 16px; height: 16px; overflow: visible; }
.ib svg[viewBox="0 0 14 14"] { width: 14px; height: 14px; }
.w22 { width: 22px; } .w24 { width: 24px; } .w25 { width: 25px; } .w26 { width: 26px; } .w28 { width: 28px; } .w30 { width: 30px; }
.ml3 { margin-left: 3px; } .ml5 { margin-left: 5px; } .ml6 { margin-left: 6px; }
.sel { border: 1px solid #555; border-radius: 4px; background: #ebebeb; }
.cvb { width: 14px; display: grid; place-items: center; }
.cvb svg, .cv { width: 8px; height: 6px; }
.sep { width: 8px; height: 24px; background: linear-gradient(#d0d0d0, #d0d0d0) center / 1px 100% no-repeat; }
.sep.tall { height: 62px; margin-top: 11px; }
.c130 { width: 130px; }
.duo { width: 51px; display: flex; }
.big { width: 50px; margin-left: 8px; padding-top: 9px; display: flex; flex-direction: column; align-items: center; gap: 4px; align-self: flex-start; }
.adds .big { margin-left: 6px; gap: 5px; }
.paste { width: 28px; height: 30px; margin-left: 4px; }
.addin { width: 28px; height: 28px; }
.pick { display: grid; align-items: center; height: 24px; border: 1px solid #777; border-radius: 4px; }
.pick select { grid-area: 1 / 1; appearance: none; width: 100%; height: 22px; padding-left: 3px; }
.pick svg { grid-area: 1 / 1; justify-self: end; width: 8px; height: 6px; margin-right: 2px; pointer-events: none; }
.wide { width: 123px; } .size { width: 43px; } .gen { width: 91px; }
.a18 { font-size: 17px; } .a16 { font-size: 14px; }
.a18, .a16 { align-items: flex-start; line-height: 24px; }
.ib .sup { width: 7px; height: 6px; margin-top: 3px; color: #1e88d2; }
.blue { fill: #1e88d2; }
.fmt { font-size: 13px; }
.ser { font-family: "Liberation Serif", serif; font-size: 14px; }
.sa { font: 13px "Noto Sans", sans-serif; text-anchor: middle; }
.ab { font: 9px "Noto Sans", sans-serif; }
.wr { font: 8px/8px "Liberation Sans", sans-serif; }
.dg { font: 8px "Liberation Sans", sans-serif; }
.az { font: bold 8px "Liberation Sans", sans-serif; }
.pct { font-size: 17px; }
.tx { gap: 4px; }
.tx svg { width: 16px; height: 16px; }
.tx .cv { width: 8px; height: 6px; margin-left: -1px; }
.tx .far { margin-left: 10px; }
.rest { flex: 1; display: flex; justify-content: flex-end; align-items: flex-end; padding: 0 9px 10px 0; }
.rest svg, .name svg, .val svg { width: 12px; height: 8px; }
.fbar { display: flex; align-items: center; height: 26px; margin: 8px 7px 0 8px; }
.box { height: 26px; display: flex; align-items: center; border: 1px solid #d0d0d0; border-radius: 4px; background: #fff; padding: 0 5px 0 7px; }
.box input { flex: 1; min-width: 0; width: 20px; }
.name { width: 102px; }
.dots { width: 4px; height: 12px; margin: 0 8px; }
.fx { width: 74px; gap: 9px; padding-left: 6px; }
.fx svg { width: 12px; height: 12px; }
.fx .tick { width: 16px; }
.fx i { font: italic 16px/20px "Liberation Serif", serif; }
.val { flex: 1; margin-left: 4px; padding-left: 9px; padding-right: 3px; }
.sheetwrap { flex: 1; min-height: 0; display: flex; padding: 7px 2px 0 1px; overflow: hidden; }
.view { flex: 1; min-width: 0; overflow: hidden; }
.sheet { width: 1204px; table-layout: fixed; border-collapse: separate; border-spacing: 0; font: 15px/18px "Liberation Sans", Arial, sans-serif; color: #000; }
.rn { width: 28px; } .w { width: 160px; } .n { width: 72px; }
.sheet th { height: 19px; padding: 0; font-weight: 400; color: #444; border-right: 1px solid #dcdcdc; background: #efefef; }
.sheet thead th { border-bottom: 1px solid #aaa; height: 18px; line-height: 17px; }
.sheet tbody th { border-right-color: #999; border-bottom: 1px solid #dcdcdc; }
.corner svg { width: 12px; height: 12px; margin-left: 13px; }
.sheet td { height: 19px; padding: 0 2px; background: #fff; border-right: 1px solid #e0e0e0; border-bottom: 1px solid #e0e0e0; }
.sheet tr:not(.t) td:nth-child(n+4):nth-child(-n+6) { text-align: right; }
.sheet .t td { height: 21px; background: #d2d2d2; border-color: #d2d2d2; font-weight: 700; }
.vscroll { width: 16px; margin-left: 4px; display: flex; flex-direction: column; align-items: center; gap: 4px; padding-top: 5px; border-radius: 8px 8px 0 0; background: #f5f5f5; }
.vscroll svg { width: 9px; height: 8px; }
.vscroll i { flex: 1; width: 9px; border-radius: 5px 5px 0 0; background: #707070; }

/* numbered callouts over the windows */
.notes { position: absolute; left: 580px; top: 100px; width: 240px; height: 410px; overflow: visible; filter: drop-shadow(3px 4px 2px rgba(0,0,0,.5)); pointer-events: none; }
.notes text { font: bold 24px "Liberation Sans", Arial, sans-serif; fill: #fff; text-anchor: middle; }
```
